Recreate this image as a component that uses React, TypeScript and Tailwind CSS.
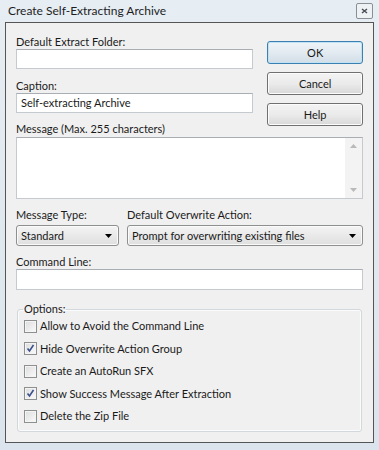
const font = { fontFamily: 'Lato, "Noto Sans", Arial, sans-serif' }

function TextBox({ value, className = '' }: { value?: string; className?: string }) {
  return (
    <div
      className={`flex items-center border border-[#c5cad0] border-t-[#a9aeb5] bg-white pl-[4px] text-[11px] text-[#1a1a1a] ${className}`}
    >
      {value}
    </div>
  )
}

function PushButton({ label, primary }: { label: string; primary?: boolean }) {
  return (
    <button
      className={
        primary
          ? 'flex h-[23px] w-full items-center justify-center rounded-[3px] border border-[#3c7fb1] bg-gradient-to-b from-[#eef4f8] via-[#e3ebf1] to-[#d2dde6] text-[11px] text-[#1a1a1a] shadow-[inset_0_0_0_1px_#bfe3f5]'
          : 'flex h-[23px] w-full items-center justify-center rounded-[3px] border border-[#707070] bg-gradient-to-b from-[#f3f3f3] via-[#ebebeb] to-[#d8d8d8] text-[11px] text-[#1a1a1a] shadow-[inset_0_0_0_1px_#fcfcfc]'
      }
    >
      {label}
    </button>
  )
}

function DropDown({ value, className = '' }: { value: string; className?: string }) {
  return (
    <div
      className={`flex h-[21px] items-center justify-between rounded-[3px] border border-[#8e8f8f] bg-gradient-to-b from-[#f4f4f4] to-[#dfdfdf] pl-[4px] pr-[6px] text-[11px] text-[#1a1a1a] shadow-[inset_0_0_0_1px_#fafafa] ${className}`}
    >
      <span>{value}</span>
      <svg width="7" height="4" viewBox="0 0 7 4">
        <path d="M0 0h7L3.5 4z" fill="#000" />
      </svg>
    </div>
  )
}

function CheckRow({ label, checked }: { label: string; checked?: boolean }) {
  return (
    <div className="flex h-[22.5px] items-center gap-[3px] text-[11px] text-[#1a1a1a]">
      <span className="flex h-[13px] w-[13px] items-center justify-center border border-[#8e8f8f] bg-gradient-to-br from-[#dcdcdc] to-[#fbfbfb] shadow-[inset_0_0_0_1px_#f4f4f4]">
        {checked && (
          <svg width="9" height="9" viewBox="0 0 9 9">
            <path d="M1.5 4.5l2 2.5 4-6" fill="none" stroke="#3a4f8c" strokeWidth="1.6" />
          </svg>
        )}
      </span>
      <span>{label}</span>
    </div>
  )
}

export default function App() {
  return (
    <div
      className="flex h-[450px] w-[379px] flex-col bg-gradient-to-b from-[#e6edf3] to-[#dbe4ec]"
      style={font}
    >
      {/* title bar */}
      <div className="flex h-[22px] items-center justify-between pl-[8px] pr-[6px]">
        <span className="text-[12px] leading-none text-[#1e1e1e]">Create Self-Extracting Archive</span>
        <span className="flex h-[16px] w-[17px] items-center justify-center rounded-[2px] border border-[#8a8f96] bg-[#eef2f5]">
          <svg width="7" height="6" viewBox="0 0 7 6">
            <path d="M1 1l5 4M6 1L1 5" stroke="#4a4f55" strokeWidth="1.5" />
          </svg>
        </span>
      </div>

      {/* client area */}
      <div className="mx-[5px] h-[421px] border border-[#555] bg-[#f0f0f0] px-[10px] pt-[12px]">
        <div className="flex items-start gap-[14px] leading-[14px]">
          <div className="flex w-[238px] flex-col">
            <span className="text-[11px] text-[#1a1a1a]">Default Extract Folder:</span>
            <TextBox className="h-[20px]" />
            <span className="mt-[10px] text-[11px] text-[#1a1a1a]">Caption:</span>
            <TextBox className="h-[20px]" value="Self-extracting Archive" />
            <span className="mt-[9px] text-[11px] text-[#1a1a1a]">Message (Max. 255 characters)</span>
          </div>
          <div className="mt-[6px] flex w-[96px] flex-col gap-[8px]">
            <PushButton label="OK" primary />
            <PushButton label="Cancel" />
            <PushButton label="Help" />
          </div>
        </div>

        {/* message */}
        <div className="mt-[1px] flex h-[62px] border border-[#c5cad0] border-t-[#a9aeb5] bg-white">
          <div className="flex-1" />
          <div className="flex w-[17px] flex-col items-center justify-between bg-[#f3f3f3] py-[6px]">
            <svg width="7" height="4" viewBox="0 0 7 4">
              <path d="M3.5 0L7 4H0z" fill="#b9b9b9" />
            </svg>
            <svg width="7" height="4" viewBox="0 0 7 4">
              <path d="M0 0h7L3.5 4z" fill="#b9b9b9" />
            </svg>
          </div>
        </div>

        {/* dropdowns */}
        <div className="mt-[9px] flex gap-[8px] text-[11px] leading-[14px] text-[#1a1a1a]">
          <div className="flex w-[103px] flex-col gap-[3px]">
            <span>Message Type:</span>
            <DropDown value="Standard" />
          </div>
          <div className="flex flex-1 flex-col gap-[3px]">
            <span>Default Overwrite Action:</span>
            <DropDown value="Prompt for overwriting existing files" />
          </div>
        </div>

        {/* command line */}
        <div className="mt-[9px] flex flex-col text-[11px] leading-[14px] text-[#1a1a1a]">
          <span>Command Line:</span>
          <TextBox className="h-[21px]" />
        </div>

        {/* options */}
        <fieldset className="mx-[1px] mt-[12px] rounded-[3px] border border-[#d3d8dc] px-[6px] pb-[3px] shadow-[inset_0_0_0_1px_#fbfbfb]">
          <legend className="ml-[-1px] px-[1px] text-[11px] leading-[14px] text-[#1a1a1a]">Options:</legend>
          <div className="-mt-[1px] flex flex-col">
            <CheckRow label="Allow to Avoid the Command Line" />
            <CheckRow label="Hide Overwrite Action Group" checked />
            <CheckRow label="Create an AutoRun SFX" />
            <CheckRow label="Show Success Message After Extraction" checked />
            <CheckRow label="Delete the Zip File" />
          </div>
        </fieldset>
      </div>
    </div>
  )
}
